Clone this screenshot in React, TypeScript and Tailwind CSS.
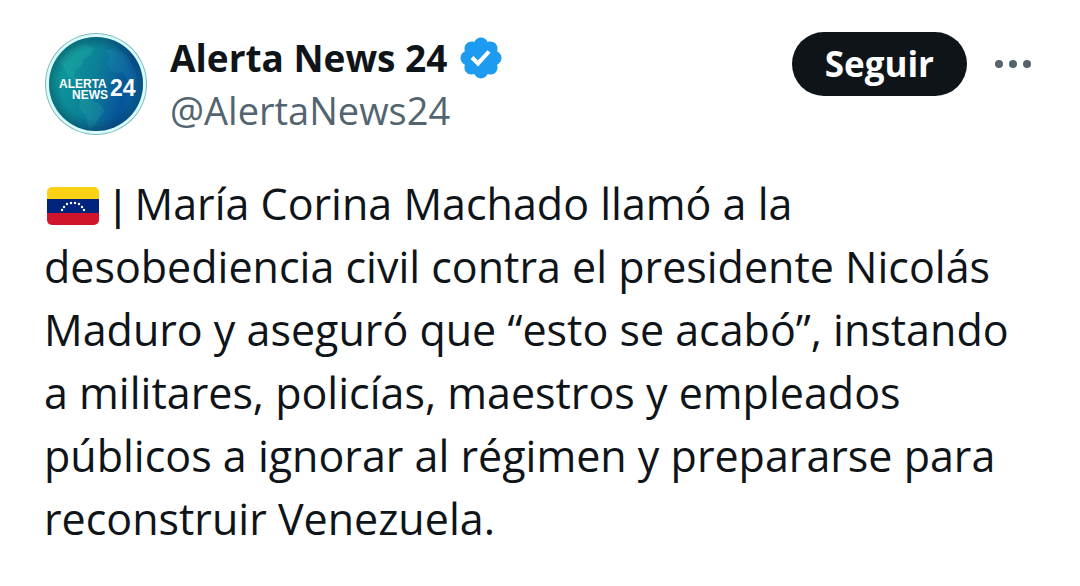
import type { SVGProps } from "react";

const STARS = [
  [15, 23],
  [17, 20],
  [20, 17],
  [24, 16],
  [28, 16],
  [32, 17],
  [35, 20],
  [37, 23],
];

function Avatar(props: SVGProps<SVGSVGElement>) {
  return (
    <svg viewBox="0 0 104 104" role="img" aria-label="Alerta News 24" {...props}>
      <defs>
        <linearGradient id="globe" x1="0" y1="0.35" x2="1" y2="0.65">
          <stop offset="0" stopColor="#0d9f9b" />
          <stop offset="0.45" stopColor="#0b8097" />
          <stop offset="0.8" stopColor="#07559a" />
          <stop offset="1" stopColor="#0668a3" />
        </linearGradient>
        <radialGradient id="shade" cx="0.5" cy="0.5" r="0.5">
          <stop offset="0.75" stopColor="#04324f" stopOpacity="0" />
          <stop offset="1" stopColor="#04324f" stopOpacity="0.4" />
        </radialGradient>
      </defs>
      <circle cx="52" cy="52" r="51" fill="#7dbcc1" />
      <circle cx="52" cy="52" r="50" fill="#d9fbfb" />
      <circle cx="52" cy="52" r="47" fill="url(#globe)" />
      <path
        d="M17 27 28 17l13-5 9 4-3 7-7 4-3 7-6 5-1 6 6 3-3 2-9-6-4-9-5-4z"
        fill="#35c3b0"
        opacity="0.22"
      />
      <path d="M36 67h11l10 6 4 6-6 7-5 8-5 3-3-12-7-9z" fill="#35c3b0" opacity="0.2" />
      <path d="m62 19 9-4 11 8 9 14 2 13-9-1-5-9-9 1-7-8 3-7z" fill="#2b9bc4" opacity="0.2" />
      <circle cx="52" cy="52" r="47" fill="url(#shade)" />
      <g fill="#fff" fontFamily="'Liberation Sans', sans-serif" fontWeight="700">
        <text x="15" y="56" fontSize="12">
          ALERTA
        </text>
        <text x="28" y="67" fontSize="12">
          NEWS
        </text>
        <text x="66" y="64" fontSize="23">
          24
        </text>
      </g>
    </svg>
  );
}

function VerifiedBadge(props: SVGProps<SVGSVGElement>) {
  return (
    <svg viewBox="0 0 24 24" role="img" aria-label="Cuenta verificada" {...props}>
      <path
        fill="#1d9bf0"
        d="M22.25 12c0-1.43-.88-2.67-2.19-3.34.46-1.39.2-2.9-.81-3.91s-2.52-1.27-3.91-.81c-.66-1.31-1.91-2.19-3.34-2.19s-2.67.88-3.33 2.19c-1.4-.46-2.91-.2-3.92.81s-1.26 2.52-.8 3.91c-1.31.67-2.2 1.91-2.2 3.34s.89 2.67 2.2 3.34c-.46 1.39-.21 2.9.8 3.91s2.52 1.26 3.91.81c.67 1.31 1.91 2.19 3.34 2.19s2.68-.88 3.34-2.19c1.39.45 2.9.2 3.91-.81s1.27-2.52.81-3.91c1.31-.67 2.19-1.91 2.19-3.34zm-11.71 4.2L6.8 12.46l1.41-1.42 2.26 2.26 4.8-5.23 1.47 1.36-6.2 6.77z"
      />
    </svg>
  );
}

function VenezuelaFlag(props: SVGProps<SVGSVGElement>) {
  return (
    <svg viewBox="0 0 52 38" role="img" aria-label="Venezuela" {...props}>
      <clipPath id="flag">
        <rect width="52" height="38" rx="5" />
      </clipPath>
      <g clipPath="url(#flag)">
        <rect width="52" height="13" fill="#fbd116" />
        <rect y="12" width="52" height="14" fill="#00247d" />
        <rect y="26" width="52" height="12" fill="#cf142b" />
      </g>
      {STARS.map(([x, y]) => (
        <circle key={x} cx={x} cy={y} r="1.2" fill="#fff" />
      ))}
    </svg>
  );
}

export default function App() {
  return (
    <article className="min-h-screen bg-white pt-8 pr-[45px] pl-11 font-['Open_Sans',sans-serif] text-[#0f1419]">
      <header className="flex items-start">
        <a href="#perfil" className="shrink-0">
          <Avatar className="size-[104px]" />
        </a>

        <div className="ml-[22px] min-w-0 flex-1">
          <div className="flex items-center gap-2.5">
            <a href="#perfil" className="text-[37px] leading-[52px] font-bold">
              Alerta News 24
            </a>
            <VerifiedBadge className="size-12 shrink-0" />
          </div>
          <a href="#perfil" className="block text-[38px] leading-[52px] text-[#536471]">
            @AlertaNews24
          </a>
        </div>

        <div className="flex items-center gap-6">
          <button type="button" className="h-16 rounded-full bg-[#0f1419] px-[33px] text-[35px] leading-[52px] font-bold text-white">
            Seguir
          </button>
          <button type="button" aria-label="Más opciones">
            <svg viewBox="0 0 44 44" className="size-11" fill="#536471">
              <circle cx="8" cy="22" r="4" />
              <circle cx="22" cy="22" r="4" />
              <circle cx="36" cy="22" r="4" />
            </svg>
          </button>
        </div>
      </header>

      <p className="mt-9 text-[43px] leading-[63px]">
        <VenezuelaFlag className="mr-0.5 ml-[3px] inline-block h-[38px] w-[52px] align-[-5px]" />{" "}
        <span className="font-['Liberation_Sans',sans-serif] leading-none">|</span> María Corina Machado llamó a la
        desobediencia civil contra el presidente Nicolás Maduro y aseguró que “esto se acabó”, instando a militares,
        policías, maestros y empleados públicos a ignorar al régimen y prepararse para reconstruir Venezuela.
      </p>
    </article>
  );
}
